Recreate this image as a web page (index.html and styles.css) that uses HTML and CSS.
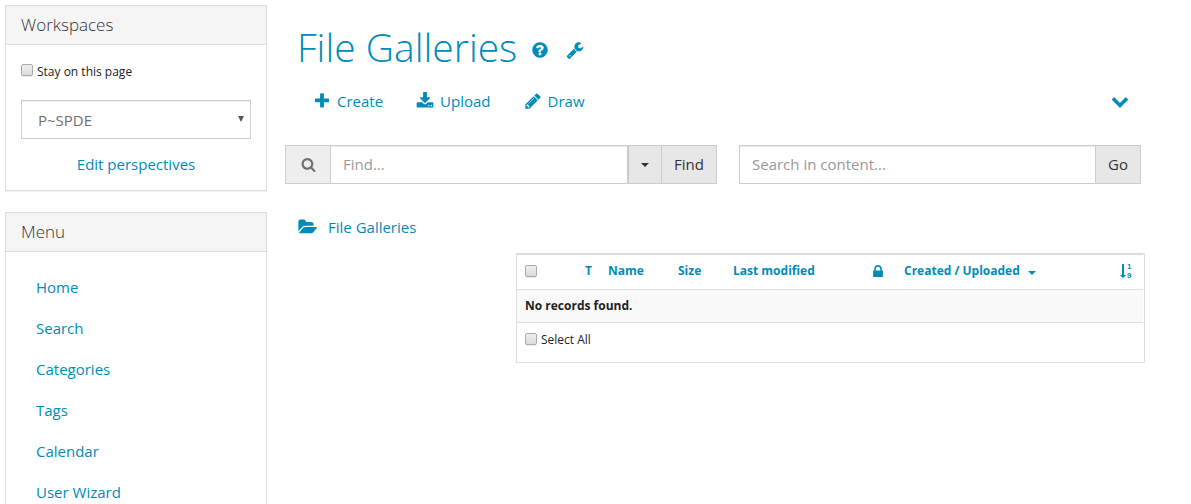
FILE: index.html
```html
<!DOCTYPE html>
<html lang="en">
<head>
<meta charset="utf-8">
<meta name="viewport" content="width=device-width, initial-scale=1">
<title>File Galleries</title>
<link rel="stylesheet" href="styles.css">
</head>
<body>
<div class="page">
  <aside class="sidebar">
    <section class="panel">
      <h3 class="panel-title">Workspaces</h3>
      <form class="panel-body">
        <label class="check"><input type="checkbox" class="checkbox">Stay on this page</label>
        <div class="select-wrap">
          <select class="control select" aria-label="Perspective"><option>P~SPDE</option></select>
        </div>
        <a class="edit-link" href="#">Edit perspectives</a>
      </form>
    </section>
    <section class="panel">
      <h3 class="panel-title">Menu</h3>
      <nav class="menu">
        <a href="#">Home</a>
        <a href="#">Search</a>
        <a href="#">Categories</a>
        <a href="#">Tags</a>
        <a href="#">Calendar</a>
        <a href="#">User Wizard</a>
      </nav>
    </section>
  </aside>

  <main class="main">
    <header class="heading">
      <h1><a href="#">File Galleries</a></h1>
      <div class="heading-tools">
        <a href="#" aria-label="Help"><svg class="icon" viewBox="0 0 1792 1792"><path d="M1024 1376v-192q0-14-9-23t-23-9h-192q-14 0-23 9t-9 23v192q0 14 9 23t23 9h192q14 0 23-9t9-23zm256-672q0-88-55.500-163t-138.500-116-170-41q-243 0-400 213-15 25 8 42l132 100q7 6 19 6 16 0 25-12 53-68 86-92 34-24 86-24 48 0 85.500 26t37.500 59q0 38-20 61t-68 45q-63 28-115.500 86.500t-52.500 125.500v36q0 14 9 23t23 9h192q14 0 23-9t9-23q0-19 21.500-49.500t54.500-49.500q32-18 49-28.500t46-35 44.500-48 28-60.500 12.500-81zm384 192q0 209-103 385.500t-279.500 279.500-385.500 103-385.500-103-279.500-279.500-103-385.500 103-385.500 279.500-279.500 385.500-103 385.500 103 279.500 279.500 103 385.500z"/></svg></a>
        <a href="#" aria-label="Settings"><svg class="icon" viewBox="0 0 1792 1792"><path d="M448 1472q0-26-19-45t-45-19-45 19-19 45 19 45 45 19 45-19 19-45zm644-420l-682 682q-37 37-90 37-52 0-91-37l-106-108q-38-36-38-90 0-53 38-91l681-681q39 98 114.500 173.500t173.500 114.500zm634-435q0 39-23 106-47 134-164.500 217.500t-258.500 83.500q-185 0-316.500-131.500t-131.500-316.500 131.500-316.500 316.500-131.500q58 0 121.500 16.500t107.500 46.500q16 11 16 28t-16 28l-293 169v224l193 107q5-3 79-48.500t135.500-81 70.500-35.500q15 0 23.500 10t8.500 25z"/></svg></a>
      </div>
    </header>

    <nav class="actions">
      <a href="#"><svg class="icon" viewBox="0 0 1792 1792"><path d="M1600 736v192q0 40-28 68t-68 28h-416v416q0 40-28 68t-68 28h-192q-40 0-68-28t-28-68v-416h-416q-40 0-68-28t-28-68v-192q0-40 28-68t68-28h416v-416q0-40 28-68t68-28h192q40 0 68 28t28 68v416h416q40 0 68 28t28 68z"/></svg>Create</a>
      <a href="#"><svg class="icon" viewBox="0 0 1792 1792"><path d="M1344 1344q0-26-19-45t-45-19-45 19-19 45 19 45 45 19 45-19 19-45zm256 0q0-26-19-45t-45-19-45 19-19 45 19 45 45 19 45-19 19-45zm128-224v320q0 40-28 68t-68 28h-1472q-40 0-68-28t-28-68v-320q0-40 28-68t68-28h465l135 136q58 56 136 56t136-56l136-136h464q40 0 68 28t28 68zm-325-569q17 41-14 70l-448 448q-18 19-45 19t-45-19l-448-448q-31-29-14-70 17-39 59-39h256v-448q0-26 19-45t45-19h256q26 0 45 19t19 45v448h256q42 0 59 39z"/></svg>Upload</a>
      <a href="#"><svg class="icon" viewBox="0 0 1792 1792"><path d="M491 1536l91-91-235-235-91 91v107h128v128h107zm523-928q0-22-22-22-10 0-17 7l-542 542q-7 7-7 17 0 22 22 22 10 0 17-7l542-542q7-7 7-17zm-54-192l416 416-832 832h-416v-416zm683 96q0 53-37 90l-166 166-416-416 166-165q36-38 90-38 53 0 91 38l235 234q37 39 37 91z"/></svg>Draw</a>
      <a class="more" href="#" aria-label="More"><svg class="icon" viewBox="0 0 1792 1792"><path d="M1683 808l-742 741q-19 19-45 19t-45-19l-742-741q-19-19-19-45.500t19-45.500l166-165q19-19 45-19t45 19l531 531 531-531q19-19 45-19t45 19l166 165q19 19 19 45.500t-19 45.500z"/></svg></a>
    </nav>

    <div class="searches">
      <form class="group find">
        <span class="addon"><svg class="icon-small" viewBox="0 0 1792 1792"><path d="M1216 832q0-185-131.500-316.500t-316.500-131.500-316.500 131.500-131.500 316.500 131.500 316.500 316.500 131.500 316.500-131.500 131.500-316.500zm512 832q0 52-38 90t-90 38q-54 0-90-38l-343-342q-179 124-399 124-143 0-273.500-55.500t-225-150-150-225-55.500-273.500 55.500-273.500 150-225 225-150 273.500-55.500 273.500 55.500 225 150 150 225 55.500 273.500q0 220-124 399l343 343q37 37 37 90z"/></svg></span>
        <input class="control" type="text" placeholder="Find..." aria-label="Find">
        <button class="button toggle" type="button" aria-label="Find options"><span class="caret"></span></button>
        <button class="button" type="button">Find</button>
      </form>
      <form class="group content">
        <input class="control" type="text" placeholder="Search in content..." aria-label="Search in content">
        <button class="button" type="button">Go</button>
      </form>
    </div>

    <a class="crumb" href="#"><svg class="icon-folder" viewBox="0 0 1920 1792"><path d="M1815 952q0 31-31 66l-336 396q-43 51-120.500 86.500t-143.500 35.500h-1088q-34 0-60.500-13t-26.500-43q0-31 31-66l336-396q43-51 120.500-86.500t143.500-35.500h1088q34 0 60.500 13t26.500 43zm-343-344v160h-832q-94 0-197 47.500t-164 119.500l-337 396-5 6q0-4-.5-12.500t-.5-12.500v-960q0-92 66-158t158-66h320q92 0 158 66t66 158v32h544q92 0 158 66t66 158z"/></svg>File Galleries</a>

    <div class="listing">
      <table class="files">
        <colgroup><col class="c-check"><col class="c-type"><col class="c-name"><col class="c-size"><col class="c-modified"><col class="c-lock"><col><col class="c-sort"></colgroup>
        <thead>
          <tr>
            <th><input type="checkbox" class="checkbox" aria-label="Select all rows"></th>
            <th><a href="#">T</a></th>
            <th><a href="#">Name</a></th>
            <th><a href="#">Size</a></th>
            <th><a href="#">Last modified</a></th>
            <th><a href="#" aria-label="Locked"><svg class="icon-lock" viewBox="320 128 1152 1408"><path d="M640 768h512v-192q0-106-75-181t-181-75-181 75-75 181v192zm832 96v576q0 40-28 68t-68 28h-960q-40 0-68-28t-28-68v-576q0-40 28-68t68-28h32v-192q0-184 132-316t316-132 316 132 132 316v192h32q40 0 68 28t28 68z"/></svg></a></th>
            <th><a class="sorted" href="#">Created / Uploaded<span class="caret caret-wide"></span></a></th>
            <th><a href="#" aria-label="Sort"><svg class="icon-sort" viewBox="0 0 12 16"><path d="M2 1h2v11h2l-3 3-3-3h2z"/><text x="7" y="6">1</text><text x="7" y="15">9</text></svg></a></th>
          </tr>
        </thead>
        <tbody>
          <tr><td colspan="8">No records found.</td></tr>
        </tbody>
      </table>
      <label class="check check-all"><input type="checkbox" class="checkbox">Select All</label>
    </div>
  </main>
</div>
</body>
</html>
```
FILE: styles.css
```css
* { box-sizing: border-box; }
body {
  margin: 0;
  background: #fff;
  color: #222;
  font: 15px/21px "Open Sans", sans-serif;
}
a { color: #008cba; text-decoration: none; }
svg { display: block; fill: currentColor; overflow: visible; }

.page { display: flex; align-items: flex-start; gap: 18px; padding: 5px 46px 0 5px; }

.sidebar { flex: 0 0 262px; display: flex; flex-direction: column; gap: 21px; }
.panel { border: 1px solid #ddd; box-shadow: 0 1px 1px rgba(0, 0, 0, .05); }
.panel-title {
  margin: 0;
  padding: 10px 15px;
  border-bottom: 1px solid #ddd;
  background: #f5f5f5;
  color: #333;
  font-size: 17px;
  font-weight: 300;
  line-height: 18px;
}
.panel-body { display: flex; flex-direction: column; padding: 15px; }

.check { display: flex; align-items: flex-start; gap: 4px; font-size: 12px; line-height: 18px; }
.checkbox {
  appearance: none;
  flex: none;
  display: block;
  width: 12px;
  height: 12px;
  margin: 0;
  border: 1px solid #aaa;
  border-radius: 2px;
  background: linear-gradient(#eee, #dcdcdc);
  box-shadow: 0 1px 0 rgba(0, 0, 0, .08);
}
.check .checkbox { margin-top: 2px; }
.panel-body .check { padding-top: 2px; }
.panel-body .check { line-height: 20px; }
.select-wrap { position: relative; margin: 18px 0 15px; }
.select-wrap::after {
  content: "";
  position: absolute;
  right: 7px;
  top: 16px;
  border: 3px solid transparent;
  border-top: 6px solid #555;
  border-bottom: 0;
  pointer-events: none;
}
.control {
  width: 100%;
  min-width: 0;
  height: 39px;
  margin: 0;
  padding: 7px 12px 9px;
  border: 1px solid #ccc;
  border-radius: 0;
  background: #fff;
  box-shadow: inset 0 1px 1px rgba(0, 0, 0, .075);
  color: #6f6f6f;
  font: inherit;
  outline: 0;
}
.control::placeholder { color: #999; opacity: 1; }
.select { display: block; appearance: none; padding: 9px 16px 7px; }
.edit-link { text-align: center; }

.menu { display: flex; flex-direction: column; padding: 15px; }
.menu a { padding: 10px 15px; }

.main { flex: 1; min-width: 0; }
.heading { display: flex; align-items: center; gap: 14px; padding: 20px 12px 0; }
.heading h1 { margin: 0; font-size: 39px; font-weight: 300; line-height: 43px; }
.heading-tools { display: flex; gap: 17px; padding-top: 6px; }
.icon { width: 18px; height: 18px; }
.icon-small { width: 15px; height: 15px; }

.actions { display: flex; align-items: center; gap: 33px; margin-top: 23px; padding: 0 16px 0 28px; }
.actions a { display: flex; align-items: center; gap: 6px; }
.actions .icon { margin-bottom: 2px; }
.actions .more { margin-left: auto; }

.searches { display: flex; gap: 22px; margin-top: 33px; padding-right: 4px; }
.group { display: flex; }
.find { flex: 432 1 0; }
.content { flex: 402 1 0; }
.addon {
  display: flex;
  flex: 0 0 45px;
  align-items: center;
  justify-content: center;
  border: 1px solid #ccc;
  border-right: 0;
  background: #eee;
  color: #6f6f6f;
}
.button {
  flex: none;
  margin: 0 0 0 -1px;
  padding: 0 12px;
  border: 1px solid #ccc;
  background: #e7e7e7;
  color: #333;
  font: inherit;
}
.toggle { margin-left: 0; }
.caret {
  display: block;
  border: 4px solid transparent;
  border-top-color: currentColor;
  border-bottom: 0;
}
.caret-wide { border-width: 4px; border-bottom: 0; margin-top: 4px; }

.crumb { display: flex; align-items: center; width: max-content; gap: 10px; margin: 33px 0 15px 14px; }
.icon-folder { width: 19px; height: 18px; margin-bottom: 2px; }

.listing { margin-left: 231px; padding-right: 1px; border: 1px solid #ddd; font-size: 12px; }
.files { width: 100%; table-layout: fixed; border-collapse: collapse; line-height: 17px; font-weight: 700; }
.files th, .files td { padding: 7px 8px 8px; text-align: left; white-space: nowrap; border-bottom: 1px solid #ddd; }
.files th { height: 35px; padding: 6px 8px 9px; border-top: 1px solid #ddd; vertical-align: middle; }
.files td { background: #f9f9f9; }
.c-check { width: 60px; }
.c-type { width: 23px; }
.c-name { width: 70px; }
.c-size { width: 55px; }
.c-modified { width: 140px; }
.c-lock { width: 31px; }
.c-sort { width: 31px; }
.sorted { display: flex; align-items: center; gap: 8px; }
.icon-lock { width: 10px; height: 12px; }
.icon-sort { width: 12px; height: 16px; font: 700 8px "Liberation Sans", sans-serif; }
.check-all { padding: 8px 8px 13px; }
```
